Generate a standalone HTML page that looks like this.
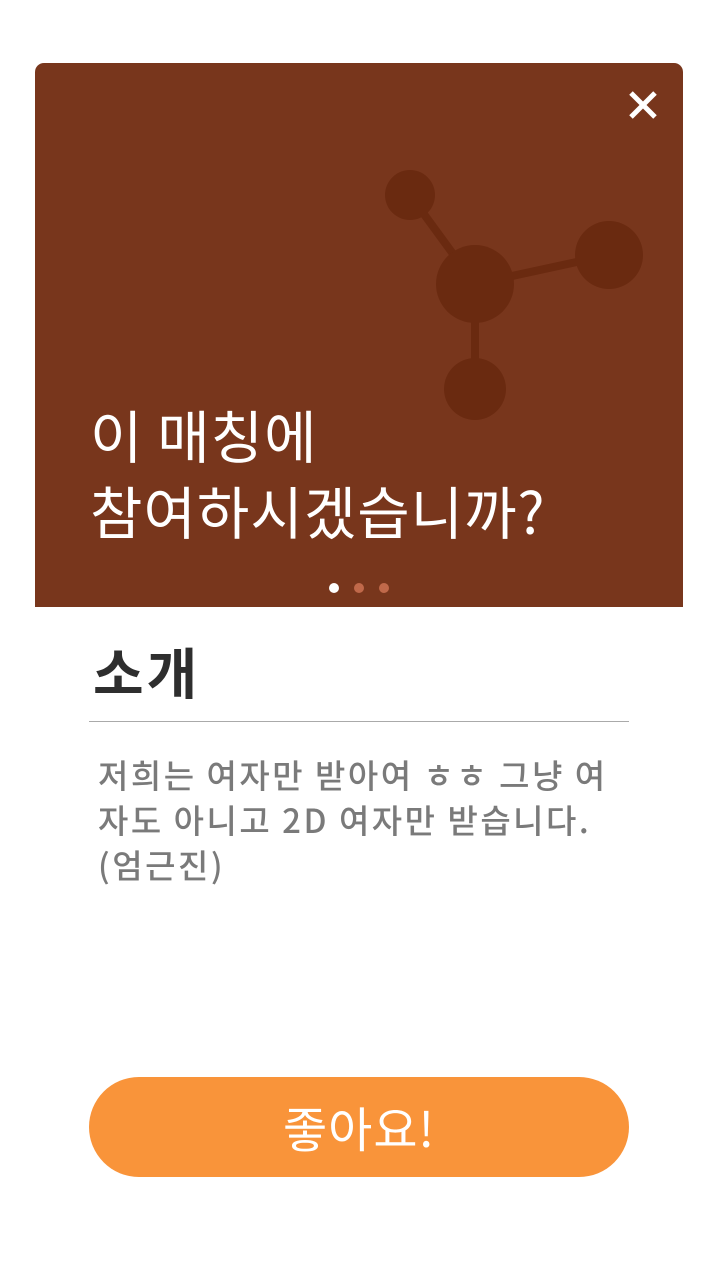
<!DOCTYPE html>
<html><head><meta charset="utf-8"><style>
body{margin:0;width:720px;height:1280px;background:#fff;position:relative;overflow:hidden;font-family:"Noto Sans CJK KR","Liberation Sans",sans-serif}
.card{position:absolute;left:35px;top:63px;width:648px;height:544px;background:#78361c;border-radius:9px 9px 0 0;overflow:hidden}
.title{position:absolute;left:55px;top:333px;color:#fff;font-size:57px;line-height:76px;letter-spacing:1px}
.dot{position:absolute;top:583px;width:10px;height:10px;border-radius:50%;background:#c0694a}
h2{position:absolute;left:93px;top:632px;margin:0;font-size:55px;font-weight:bold;color:#2e2e2e;line-height:76px;letter-spacing:3px}
.line{position:absolute;left:89px;top:721px;width:540px;height:1px;background:#aaa}
.body{position:absolute;left:98px;top:752px;width:525px;font-size:33px;line-height:45px;color:#7a7a7a;word-break:break-all;letter-spacing:2.5px;font-weight:500}
.btn{position:absolute;left:89px;top:1077px;width:540px;height:100px;border-radius:50px;background:#f9943a;color:#fff;font-size:48px;text-align:center;line-height:98px;letter-spacing:1px}
</style></head><body>
<div class="card">
<svg width="648" height="544" style="position:absolute;left:0;top:0">
<g fill="#6a2a10" stroke="#6a2a10" stroke-width="8">
<line x1="375" y1="132" x2="440" y2="221"/><line x1="440" y1="221" x2="574" y2="192"/><line x1="440" y1="221" x2="440" y2="326"/>
<circle cx="375" cy="132" r="25" stroke="none"/><circle cx="440" cy="221" r="39" stroke="none"/><circle cx="574" cy="192" r="34" stroke="none"/><circle cx="440" cy="326" r="31" stroke="none"/>
</g>
<g stroke="#fff" stroke-width="5"><line x1="596" y1="30" x2="620" y2="54"/><line x1="620" y1="30" x2="596" y2="54"/></g>
</svg>
<div class="title">이 매칭에<br>참여하시겠습니까?</div>
</div>
<div class="dot" style="left:329px;background:#fff"></div>
<div class="dot" style="left:354px"></div>
<div class="dot" style="left:379px"></div>
<h2>소개</h2>
<div class="line"></div>
<div class="body">저희는 여자만 받아여 ㅎㅎ 그냥 여자도 아니고 2D 여자만 받습니다. (엄근진)</div>
<div class="btn">좋아요!</div>
</body></html>
